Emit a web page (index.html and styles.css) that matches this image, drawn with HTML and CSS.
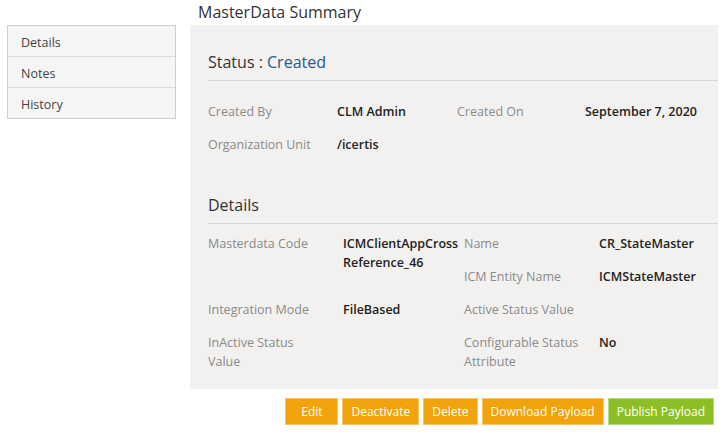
FILE: index.html
```html
<!DOCTYPE html>
<html>
<head>
<meta charset="utf-8">
<link rel="stylesheet" href="styles.css">
</head>
<body>
<div class="page">
  <nav class="side">
    <ul class="side-list">
      <li class="side-item">Details</li>
      <li class="side-item">Notes</li>
      <li class="side-item">History</li>
    </ul>
  </nav>
  <main class="main">
    <h1 class="title">MasterData Summary</h1>
    <section class="panel">
      <h2 class="section-head">Status : <span class="status-val">Created</span></h2>
      <div class="grid status-grid">
        <div class="lbl">Created By</div>
        <div class="val">CLM Admin</div>
        <div class="lbl">Created On</div>
        <div class="val">September 7, 2020</div>
        <div class="lbl">Organization Unit</div>
        <div class="val">/icertis</div>
        <div class="lbl"></div>
        <div class="val"></div>
      </div>
      <h2 class="section-head details-head">Details</h2>
      <div class="grid details-grid">
        <div class="lbl span2 c1">Masterdata Code</div>
        <div class="val span2 c2">ICMClientAppCross Reference_46</div>
        <div class="lbl c3">Name</div>
        <div class="val c4">CR_StateMaster</div>
        <div class="lbl c3">ICM Entity Name</div>
        <div class="val c4">ICMStateMaster</div>
        <div class="lbl c1">Integration Mode</div>
        <div class="val c2">FileBased</div>
        <div class="lbl c3">Active Status Value</div>
        <div class="val c4"></div>
        <div class="lbl c1">InActive Status Value</div>
        <div class="val c2"></div>
        <div class="lbl c3">Configurable Status Attribute</div>
        <div class="val c4">No</div>
      </div>
    </section>
    <div class="actions">
      <button class="btn">Edit</button>
      <button class="btn">Deactivate</button>
      <button class="btn">Delete</button>
      <button class="btn">Download Payload</button>
      <button class="btn btn-green">Publish Payload</button>
    </div>
  </main>
</div>
</body>
</html>
```
FILE: styles.css
```css
* { box-sizing: border-box; }
html, body {
  margin: 0;
  padding: 0;
  background: #ffffff;
  font-family: "Open Sans", "Noto Sans", sans-serif;
  color: #333333;
}
.page {
  display: flex;
  align-items: flex-start;
  width: 718px;
}
.side {
  width: 176px;
  padding: 25px 0 0 7px;
  flex: none;
}
.side-list {
  list-style: none;
  margin: 0;
  padding: 0;
  border: 1px solid #cfcfcf;
  background: #f5f5f5;
}
.side-item {
  height: 31px;
  line-height: 29px;
  padding: 2px 0 0 13px;
  font-size: 12.5px;
  color: #444444;
  border-top: 1px solid #dcdcdc;
}
.side-item:first-child { border-top: none; height: 30px; }
.main {
  margin-left: 14px;
  flex: 1;
  min-width: 0;
}
.title {
  margin: 0;
  padding-left: 8px;
  font-size: 16px;
  line-height: 24px;
  font-weight: 400;
  color: #333333;
  height: 25px;
}
.panel {
  background: #f2f1f0;
  padding: 25px 0 11px 18px;
}
.section-head {
  margin: 0;
  font-size: 16px;
  line-height: 24px;
  font-weight: 400;
  color: #333333;
  padding-bottom: 6px;
  border-bottom: 1px solid #d6d6d6;
}
.status-val { color: #2a5887; }
.details-head { margin-top: 32px; }
.grid {
  display: grid;
  font-size: 12.5px;
  line-height: 19px;
}
.status-grid {
  grid-template-columns: 129px 120px 128px 1fr;
  margin-top: 14px;
}
.details-grid {
  grid-template-columns: 135px 121px 135px 1fr;
  grid-auto-rows: minmax(33px, auto);
  margin-top: 3px;
}
.lbl, .val { padding: 7px 0; }
.lbl { color: #8a8a8a; }
.val { color: #222222; font-weight: 600; }
.details-grid .c1 { padding-right: 25px; }
.details-grid .c2 { padding-right: 3px; }
.details-grid .c3 { padding-right: 8px; }
.c1 { grid-column: 1; }
.c2 { grid-column: 2; }
.c3 { grid-column: 3; }
.c4 { grid-column: 4; }
.span2 { grid-row: span 2; }
.actions {
  display: flex;
  justify-content: flex-end;
  gap: 4px;
  padding: 9px 4px 0 0;
}
.btn {
  font-family: inherit;
  font-size: 12px;
  height: 27px;
  min-width: 53px;
  padding: 0 8px;
  border: 1px solid #f7c463;
  background: #f0a30a;
  color: #ffffff;
  cursor: pointer;
}
.btn-green {
  background: #8cbf26;
  border-color: #b5d878;
}
```
